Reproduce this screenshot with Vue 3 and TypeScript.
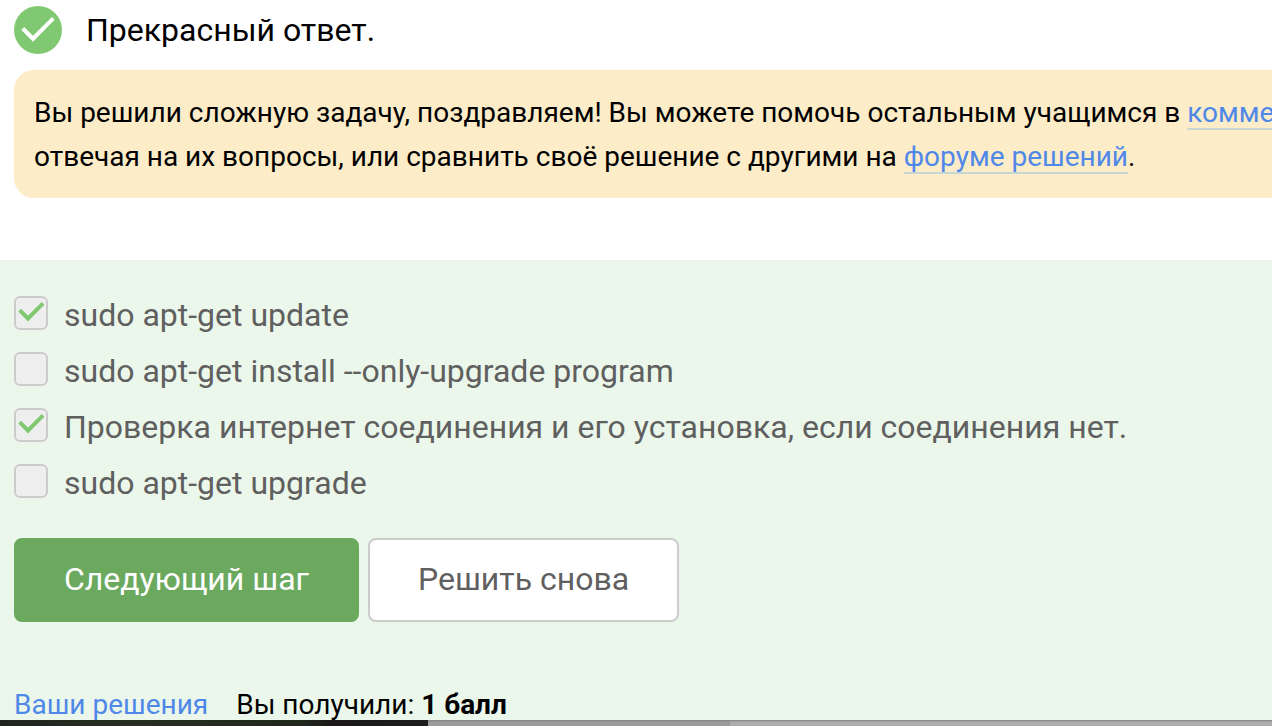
<script setup lang="ts">
import { ref } from 'vue'

interface Option {
  id: string
  label: string
  checked: boolean
}

const options = ref<Option[]>([
  { id: 'opt-update', label: 'sudo apt-get update', checked: true },
  { id: 'opt-install', label: 'sudo apt-get install --only-upgrade program', checked: false },
  { id: 'opt-network', label: 'Проверка интернет соединения и его установка, если соединения нет.', checked: true },
  { id: 'opt-upgrade', label: 'sudo apt-get upgrade', checked: false },
])
</script>

<template>
  <main class="page">
    <header class="status">
      <svg class="status-icon" viewBox="0 0 48 48" aria-hidden="true">
        <circle cx="24" cy="24" r="24" fill="#80c972" />
        <path d="M7.300 24L10.200 21.100L19 29.800L38 11L40.600 13.700L19 35.800Z" fill="#fff" />
      </svg>
      <span>Прекрасный ответ.</span>
    </header>

    <p class="notice">
      Вы решили сложную задачу, поздравляем! Вы можете помочь остальным учащимся в
      <a href="#comments">комментариях</a>,<br />
      отвечая на их вопросы, или сравнить своё решение с другими на
      <a href="#solutions">форуме решений</a>.
    </p>

    <section class="quiz">
      <ul class="options">
        <li v-for="option in options" :key="option.id" class="option">
          <span class="box">
            <input :id="option.id" v-model="option.checked" type="checkbox" />
            <svg v-if="option.checked" class="tick" viewBox="0 0 34 34" aria-hidden="true">
              <path d="M4.200 15.500L7 12.700L14 19.400L27.800 6L30.400 8.700L14 25.600Z" fill="#80c972" />
            </svg>
          </span>
          <label :for="option.id">{{ option.label }}</label>
        </li>
      </ul>

      <div class="actions">
        <button type="button" class="button primary">Следующий шаг</button>
        <button type="button" class="button secondary">Решить снова</button>
      </div>

      <footer class="result">
        <a href="#my-solutions">Ваши решения</a>
        <span>Вы получили: <b>1 балл</b></span>
      </footer>
    </section>

    <div class="backdrop" aria-hidden="true">
      <span class="backdrop-dark"></span>
      <span class="backdrop-mid"></span>
      <span class="backdrop-light"></span>
    </div>
  </main>
</template>

<style>
body {
  margin: 0;
}
</style>

<style scoped>
.page {
  display: flex;
  flex-direction: column;
  height: 100vh;
  overflow: hidden;
  background: #fff;
  color: #000;
  font-family: Roboto, "Liberation Sans", sans-serif;
}

.status {
  display: flex;
  flex-shrink: 0;
  align-items: center;
  gap: 24px;
  padding: 6px 14px 16px;
  font-size: 32px;
  line-height: 48px;
}

.status-icon {
  width: 48px;
  height: 48px;
}

.notice {
  flex-shrink: 0;
  margin: 0 -32px 62px 14px;
  padding: 21px 20px 19px;
  border-radius: 20px;
  background: #fdecc8;
  font-size: 28px;
  line-height: 44px;
  white-space: nowrap;
}

a {
  color: #4f88e8;
  text-decoration: none;
}

.notice a {
  text-decoration: underline 2px #c9d5d3;
  text-decoration-skip-ink: none;
  text-underline-offset: 6px;
}

.quiz {
  flex: 1;
  min-height: 0;
  overflow: hidden;
  padding: 33px 14px 0;
  background: #ebf7ea;
}

.options {
  display: flex;
  flex-direction: column;
  gap: 12px;
  margin: 0;
  padding: 0;
  list-style: none;
  color: #5f5f5f;
  font-size: 32px;
  line-height: 44px;
}

.option {
  display: flex;
  gap: 16px;
}

.box {
  position: relative;
  width: 34px;
  height: 34px;
  margin-top: 3px;
}

.box input {
  display: block;
  box-sizing: border-box;
  width: 34px;
  height: 34px;
  margin: 0;
  border: 2px solid #ccc;
  border-radius: 6px;
  background: #eee;
  appearance: none;
}

.tick {
  position: absolute;
  inset: 0;
  pointer-events: none;
}

.actions {
  display: flex;
  gap: 9px;
  margin-top: 33px;
}

.button {
  padding: 19px 48px 21px;
  border: 2px solid #ccc;
  border-radius: 8px;
  font-family: inherit;
  font-size: 32px;
  line-height: 40px;
}

.primary {
  border-color: #6ba95f;
  background: #6ba95f;
  color: #fff;
}

.secondary {
  background: #fff;
  color: #5f5f5f;
}

.result {
  display: flex;
  gap: 28px;
  margin-top: 63px;
  font-size: 28px;
  line-height: 40px;
}

.backdrop {
  display: flex;
  flex-shrink: 0;
  height: 6px;
}

.backdrop-dark {
  width: 428px;
  background: linear-gradient(90deg, #20241f, #252e20 30%, #20281d 70%, #1b1718 78%, #1c1d1a);
}

.backdrop-mid {
  width: 302px;
  background: linear-gradient(#858585, #9b9b9b 40%);
}

.backdrop-light {
  flex: 1;
  background: linear-gradient(#858585, #adadad 40%);
}
</style>
